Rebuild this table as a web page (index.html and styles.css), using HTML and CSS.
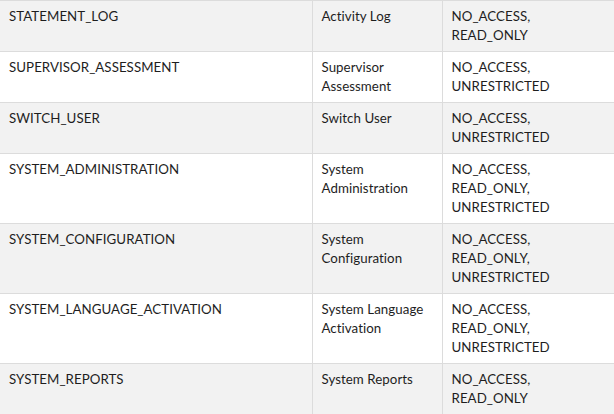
FILE: index.html
```html
<!DOCTYPE html>
<html>
<head>
<meta charset="utf-8">
<link rel="stylesheet" href="styles.css">
</head>
<body>
<table class="perm-table">
  <colgroup>
    <col class="col-key">
    <col class="col-name">
    <col class="col-levels">
  </colgroup>
  <tbody>
    <tr class="row-shaded">
      <td>STATEMENT_LOG</td>
      <td>Activity Log</td>
      <td>NO_ACCESS,<br>READ_ONLY</td>
    </tr>
    <tr>
      <td>SUPERVISOR_ASSESSMENT</td>
      <td>Supervisor Assessment</td>
      <td>NO_ACCESS,<br>UNRESTRICTED</td>
    </tr>
    <tr class="row-shaded">
      <td>SWITCH_USER</td>
      <td>Switch User</td>
      <td>NO_ACCESS,<br>UNRESTRICTED</td>
    </tr>
    <tr>
      <td>SYSTEM_ADMINISTRATION</td>
      <td>System Administration</td>
      <td>NO_ACCESS,<br>READ_ONLY,<br>UNRESTRICTED</td>
    </tr>
    <tr class="row-shaded">
      <td>SYSTEM_CONFIGURATION</td>
      <td>System Configuration</td>
      <td>NO_ACCESS,<br>READ_ONLY,<br>UNRESTRICTED</td>
    </tr>
    <tr>
      <td>SYSTEM_LANGUAGE_ACTIVATION</td>
      <td>System Language Activation</td>
      <td>NO_ACCESS,<br>READ_ONLY,<br>UNRESTRICTED</td>
    </tr>
    <tr class="row-shaded">
      <td>SYSTEM_REPORTS</td>
      <td>System Reports</td>
      <td>NO_ACCESS,<br>READ_ONLY</td>
    </tr>
  </tbody>
</table>
</body>
</html>
```

FILE: styles.css
```css
html, body {
  margin: 0;
  padding: 0;
  background: #ffffff;
}

.perm-table {
  width: 640px;
  border-collapse: collapse;
  table-layout: fixed;
  font-family: "Lato", "Liberation Sans", sans-serif;
  font-size: 13.3px;
  line-height: 19px;
  letter-spacing: 0.05px;
  color: #1e1e1e;
}

.col-key { width: 312px; }
.col-name { width: 130px; }
.col-levels { width: 198px; }

.perm-table td {
  vertical-align: top;
  padding: 6px 9px 6px 9px;
  border: 1px solid #dcdcdc;
}

.perm-table td:first-child {
  border-left: none;
}

.row-shaded {
  background: #f2f2f2;
}
```
